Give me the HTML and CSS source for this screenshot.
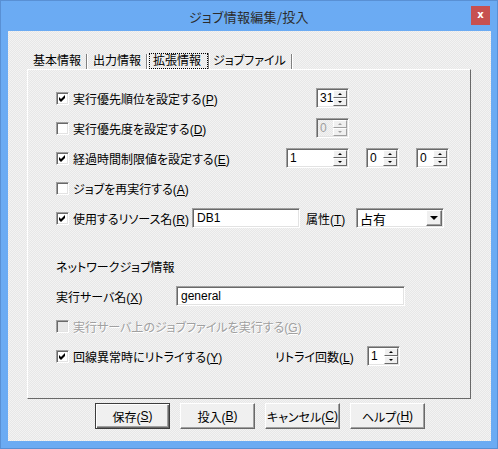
FILE: index.html
```html
<!DOCTYPE html>
<html lang="ja">
<head>
  <meta charset="UTF-8">
  <title>ジョブ情報編集/投入</title>
  <link rel="stylesheet" href="styles.css">
</head>
<body>
  <div class="window">
    <div class="titlebar">
      <span class="title">ジョブ情報編集/投入</span>
      <span class="close">x</span>
    </div>
    <div class="client">
      <div class="tabs">
        <span class="tab first">基本情報</span>
        <span class="tab">出力情報</span>
        <span class="tab active"><span class="focus">拡張情報</span></span>
        <span class="tab last">ジョブファイル</span>
      </div>

      <div class="panel">
        <div class="row">
          <label class="check w260"><span class="box"><svg width="7" height="7" viewBox="0 0 7 7"><path d="M0 2L2 4L6 0V3L2 7L0 5Z"/></svg></span><span>実行優先順位を設定する(<u>P</u>)</span></label>
          <div class="field spin w33"><span class="val">31</span><span class="arrows"><i class="up"></i><i class="down"></i></span></div>
        </div>
        <div class="row">
          <label class="check w260"><span class="box"></span><span>実行優先度を設定する(<u>D</u>)</span></label>
          <div class="field spin w33 disabled"><span class="val">0</span><span class="arrows"><i class="up"></i><i class="down"></i></span></div>
        </div>
        <div class="row">
          <label class="check w230"><span class="box"><svg width="7" height="7" viewBox="0 0 7 7"><path d="M0 2L2 4L6 0V3L2 7L0 5Z"/></svg></span><span>経過時間制限値を設定する(<u>E</u>)</span></label>
          <div class="field spin w63"><span class="val">1</span><span class="arrows"><i class="up"></i><i class="down"></i></span></div>
          <div class="field spin w33 gap17"><span class="val">0</span><span class="arrows"><i class="up"></i><i class="down"></i></span></div>
          <div class="field spin w33 gap17"><span class="val">0</span><span class="arrows"><i class="up"></i><i class="down"></i></span></div>
        </div>
        <div class="row">
          <label class="check"><span class="box"></span><span>ジョブを再実行する(<u>A</u>)</span></label>
        </div>
        <div class="row">
          <label class="check w136"><span class="box"><svg width="7" height="7" viewBox="0 0 7 7"><path d="M0 2L2 4L6 0V3L2 7L0 5Z"/></svg></span><span>使用するリソース名(<u>R</u>)</span></label>
          <div class="field w108">DB1</div>
          <span class="label w50 gap6">属性(<u>T</u>)</span>
          <div class="field combo w88"><span class="val">占有</span><span class="drop"></span></div>
        </div>

        <div class="row section">ネットワークジョブ情報</div>
        <div class="row">
          <span class="label w120">実行サーバ名(<u>X</u>)</span>
          <div class="field w229">general</div>
        </div>
        <div class="row">
          <label class="check disabled"><span class="box"></span><span>実行サーバ上のジョブファイルを実行する(<u>G</u>)</span></label>
        </div>
        <div class="row">
          <label class="check w219"><span class="box"><svg width="7" height="7" viewBox="0 0 7 7"><path d="M0 2L2 4L6 0V3L2 7L0 5Z"/></svg></span><span>回線異常時にリトライする(<u>Y</u>)</span></label>
          <span class="label w92">リトライ回数(<u>L</u>)</span>
          <div class="field spin w33"><span class="val">1</span><span class="arrows"><i class="up"></i><i class="down"></i></span></div>
        </div>
      </div>

      <div class="buttons">
        <span class="btn default">保存(<u>S</u>)</span>
        <span class="btn">投入(<u>B</u>)</span>
        <span class="btn">キャンセル(<u>C</u>)</span>
        <span class="btn">ヘルプ(<u>H</u>)</span>
      </div>
    </div>
  </div>
</body>
</html>
```

FILE: styles.css
```css
* { box-sizing: border-box; }
body { margin: 0; font-family: "Liberation Sans", "Noto Sans CJK JP", sans-serif; font-size: 12px; color: #000; font-feature-settings: "palt"; }
u { text-decoration: underline; text-underline-offset: 1px; }

/* window frame */
.window { width: 498px; height: 449px; background: #6babf3; border: 1px solid #5990d4; display: flex; flex-direction: column; }
.titlebar { height: 30px; display: grid; grid-template-columns: 1fr auto 1fr; align-items: center; }
.title { grid-column: 2; font-family: "Noto Sans CJK JP", sans-serif; font-size: 13px; color: #2b2b2b; letter-spacing: 0.3px; }
.close { grid-column: 3; justify-self: end; align-self: start; width: 19px; height: 19px; margin: 5px 7px 0 0; background: #c75050; color: #fff; font: bold 10px/18px "DejaVu Sans", sans-serif; text-align: center; }
.client { flex: 1; margin: 0 6px 7px 7px; padding: 19px 0 0 19px; background: repeating-conic-gradient(#f3f3f3 0 25%, #e7e7e7 0 50%) 0 0 / 2px 2px; }

/* tabs */
.tabs { display: flex; align-items: flex-end; height: 19px; }
.tab { line-height: 15px; padding: 0 5px; margin-right: 1px; border-right: 1px solid #808080; box-shadow: 1px 0 0 #fff; }
.tab.first { padding-left: 6px; }
.tab.active { padding: 0 0 0 1px; }
.tab.last { padding-left: 3px; }
.focus { display: block; padding: 0 6px 0 3px; border: 1px dotted #000; line-height: 14px; }

.panel { width: 444px; height: 330px; border: 1px solid; border-color: #fff #696969 #696969 #fff; padding: 13px 0 0 28px; }
.row { display: flex; align-items: center; height: 30px; white-space: nowrap; }
.row.section { margin-top: 18px; }

/* checkboxes */
.check { display: flex; align-items: center; gap: 4px; }
.box { width: 13px; height: 13px; flex: none; background: #fff; border: 1px solid; border-color: #a0a0a0 #fff #fff #a0a0a0; box-shadow: inset 1px 1px 0 #696969, inset -1px -1px 0 #e3e3e3; display: flex; align-items: center; justify-content: center; }
.box svg { fill: #000; }
.check.disabled { color: #a0a0a0; text-shadow: 1px 1px 0 #fff; }
.check.disabled .box { background: #e8e8e8; }
.label { display: block; }

.w33 { width: 33px; }
.w50 { width: 50px; }
.w63 { width: 63px; }
.w88 { width: 88px; }
.w92 { width: 92px; }
.w108 { width: 108px; }
.w120 { width: 120px; }
.w136 { width: 136px; }
.w219 { width: 219px; }
.w229 { width: 229px; }
.w230 { width: 230px; }
.w260 { width: 260px; }
.gap6 { margin-left: 6px; }
.gap17 { margin-left: 17px; }

/* edit fields */
.field { height: 20px; flex: none; background: #fff; border: 1px solid; border-color: #a0a0a0 #fff #fff #a0a0a0; box-shadow: inset 1px 1px 0 #696969, inset -1px -1px 0 #e3e3e3; padding: 1px 2px 1px 3px; display: flex; align-items: center; }
.w108.field, .w229.field { padding-left: 4px; }
.field .val { flex: 1; }
.spin { padding-right: 1px; }
.arrows { width: 14px; height: 16px; display: flex; flex-direction: column; }
.arrows i { flex: 1; display: flex; align-items: center; justify-content: center; background: #f0f0f0; border: 1px solid; border-color: #fff #696969 #696969 #fff; }
.arrows .up::before { content: ""; border: 2px solid transparent; border-top: 0; border-bottom: 2px solid #000; }
.arrows .down::before { content: ""; border: 2px solid transparent; border-bottom: 0; border-top: 2px solid #000; }
.spin.disabled { background: transparent; color: #a0a0a0; }
.spin.disabled .arrows i { border-color: #fff #a0a0a0 #a0a0a0 #fff; }
.spin.disabled .arrows i::before { border-top-color: transparent; border-bottom-color: transparent; }
.spin.disabled .arrows .up::before { border-bottom-color: #a0a0a0; }
.spin.disabled .arrows .down::before { border-top-color: #a0a0a0; }

.combo { padding-right: 1px; font-size: 13px; }
.drop { width: 16px; height: 16px; display: flex; align-items: center; justify-content: center; background: #f0f0f0; border: 1px solid; border-color: #fff #696969 #696969 #fff; box-shadow: inset -1px -1px 0 #a0a0a0; }
.drop::before { content: ""; border: 4px solid transparent; border-bottom: 0; border-top: 4px solid #000; }

/* buttons */
.buttons { display: flex; gap: 10px; margin: 4px 0 0 68px; }
.btn { width: 75px; height: 26px; display: flex; align-items: center; justify-content: center; background: #f0f0f0; border: 1px solid; border-color: #fff #696969 #696969 #fff; box-shadow: inset -1px -1px 0 #a0a0a0; }
.btn.default { border-color: #3c3c3c; box-shadow: inset 1px 1px 0 #fff, inset -1px -1px 0 #696969, inset -2px -2px 0 #a0a0a0; }
```
